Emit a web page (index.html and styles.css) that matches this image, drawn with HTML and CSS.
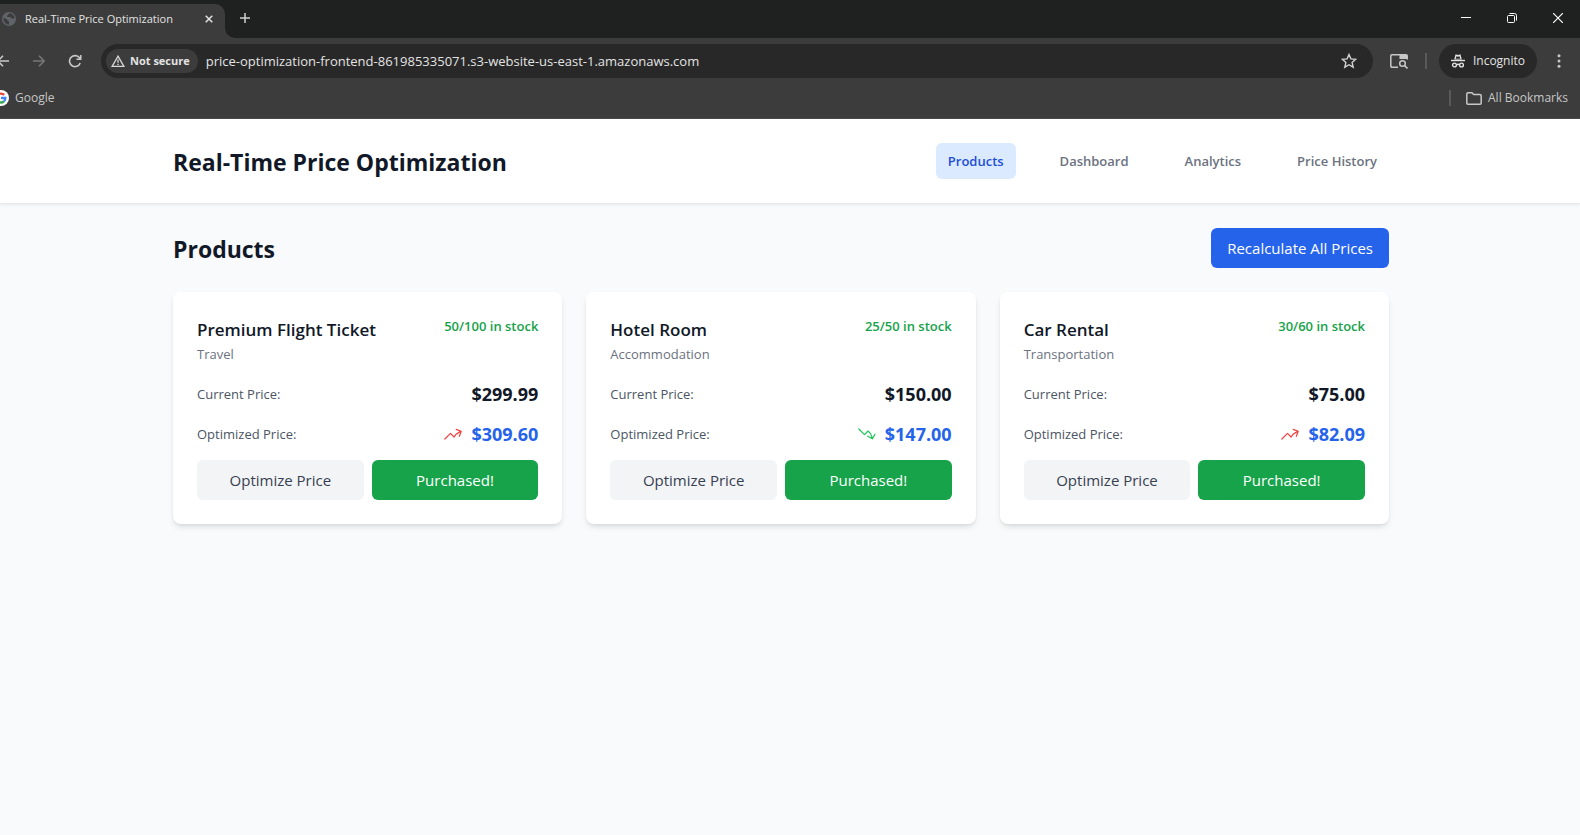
FILE: index.html
```html
<!DOCTYPE html>
<html lang="en">
<head>
<meta charset="utf-8">
<meta name="viewport" content="width=device-width, initial-scale=1">
<title>Real-Time Price Optimization</title>
<link rel="stylesheet" href="styles.css">
</head>
<body>
<div class="browser">
  <div class="tab-strip">
    <div class="tab">
      <svg class="tab-icon" width="14" height="14" viewBox="0 0 14 14"><circle cx="7" cy="7" r="7" fill="#606368"/><path d="M1.5 5.5C3 7 5 6.5 5.3 8c.2 1 1.700.8 1.700 2v2.700C4 12.700 1.200 10 1.500 5.500zM7 1.300c-.8 1-.3 1.700-1.700 2.200-.8.300-.4 1.500.6 1.500h2.300c1 0 .8 1.700 1.800 1.700s1.300-.8 2.700-.2C12.500 3.500 10 1.300 7 1.300z" fill="#3c3c3c"/></svg>
      <span class="tab-title">Real-Time Price Optimization</span>
      <button class="icon-button tab-close" aria-label="Close tab"><svg width="8" height="8" viewBox="0 0 8 8"><path d="M.7.7l6.600 6.600M7.300.7L.7 7.300" stroke="#e3e3e3" stroke-width="1.500"/></svg></button>
    </div>
    <svg class="tab-foot" width="10" height="10" viewBox="0 0 10 10"><path d="M0 0a10 10 0 0 0 10 10H0z" fill="#3c3c3c"/></svg>
    <button class="icon-button new-tab" aria-label="New tab"><svg width="10" height="10" viewBox="0 0 10 10"><path d="M5 0v10M0 5h10" stroke="#d0d0d0" stroke-width="1.500"/></svg></button>
    <div class="window-controls">
      <button class="icon-button" aria-label="Minimize"><svg width="10" height="10" viewBox="0 0 10 10"><path d="M0 4.500h10" stroke="#fff"/></svg></button>
      <button class="icon-button" aria-label="Restore"><svg width="10" height="10" viewBox="0 0 10 10"><rect x=".5" y="2.500" width="7" height="7" rx="1" fill="none" stroke="#fff"/><path d="M2.500.5h5a2 2 0 0 1 2 2v5" fill="none" stroke="#fff"/></svg></button>
      <button class="icon-button" aria-label="Close"><svg width="10" height="10" viewBox="0 0 10 10"><path d="M0 0l10 10M10 0L0 10" stroke="#fff" stroke-width="1.200"/></svg></button>
    </div>
  </div>
  <div class="toolbar">
    <button class="icon-button" aria-label="Back"><svg width="9" height="12" viewBox="3 0 9 12"><path d="M12 6H1M6 .8L.8 6 6 11.200" fill="none" stroke="#c7c7c7" stroke-width="1.600"/></svg></button>
    <button class="icon-button forward" aria-label="Forward"><svg width="12" height="12" viewBox="0 0 12 12"><path d="M0 6h11M6 .8L11.200 6 6 11.200" fill="none" stroke="#777" stroke-width="1.600"/></svg></button>
    <button class="icon-button reload" aria-label="Reload"><svg width="14" height="14" viewBox="0 0 14 14"><path d="M12.200 9A5.500 5.500 0 1 1 11 3.300l1.300 1.400M12.700 1v4.200H8.500" fill="none" stroke="#c7c7c7" stroke-width="1.600"/></svg></button>
    <div class="omnibox">
      <button class="security"><svg width="14" height="12" viewBox="0 0 14 12"><path d="M7 1.200L12.900 11.300H1.100z" fill="none" stroke="#d8d8d8" stroke-width="1.300"/><path d="M7 4.500v3.300M7 8.700v1.300" stroke="#d8d8d8" stroke-width="1.300"/></svg>Not secure</button>
      <input class="address" type="text" aria-label="Address" value="price-optimization-frontend-861985335071.s3-website-us-east-1.amazonaws.com">
      <button class="icon-button" aria-label="Bookmark this page"><svg width="16" height="16" viewBox="0 0 16 16"><path d="M8 1.500l1.900 4.400 4.800.4-3.600 3.200 1.100 4.700L8 11.700l-4.200 2.500 1.100-4.700L1.300 6.300l4.800-.4z" fill="none" stroke="#d0d0d0" stroke-width="1.400"/></svg></button>
    </div>
    <button class="icon-button lens" aria-label="Search this page"><svg width="18" height="15" viewBox="0 0 18 15"><path d="M8 13.200H2a1.200 1.200 0 0 1-1.200-1.200V2A1.200 1.200 0 0 1 2 .8h14A1.200 1.200 0 0 1 17.200 2v3.500" fill="none" stroke="#c7c7c7" stroke-width="1.500"/><path d="M9.500.5H16A1.500 1.500 0 0 1 17.500 2v3h-8z" fill="#c7c7c7"/><circle cx="12.500" cy="9.500" r="2.800" fill="none" stroke="#c7c7c7" stroke-width="1.500"/><path d="M14.500 11.500l3 3" stroke="#c7c7c7" stroke-width="1.600"/></svg></button>
    <span class="divider"></span>
    <button class="incognito"><svg width="14" height="14" viewBox="0 0 14 14"><path d="M3.200 5.500L4.400.8q.2-.6.8-.4L7 1l1.800-.6q.6-.2.800.4l1.200 4.700z" fill="#e3e3e3"/><path d="M4.700 4.800L5.500 2.200 7 2.700l1.500-.5.8 2.600z" fill="#282828"/><path d="M0 6.500h14" stroke="#e3e3e3" stroke-width="1.400"/><g fill="none" stroke="#e3e3e3" stroke-width="1.400"><circle cx="3.500" cy="11" r="1.900"/><circle cx="10.500" cy="11" r="1.900"/><path d="M5.300 10.800q1.700-1 3.400 0"/></g></svg>Incognito</button>
    <button class="icon-button menu" aria-label="Menu"><svg width="4" height="14" viewBox="0 0 4 14" fill="#c7c7c7"><circle cx="2" cy="1.700" r="1.500"/><circle cx="2" cy="7" r="1.500"/><circle cx="2" cy="12.300" r="1.500"/></svg></button>
  </div>
  <div class="bookmarks">
    <a class="bookmark" href="#"><svg width="9" height="16" viewBox="7 0 9 16"><circle cx="8" cy="8" r="8" fill="#fff"/><g fill="none" stroke-width="2.300"><path d="M11.200 4.900A4.500 4.500 0 0 0 4.200 5.600" stroke="#ea4335"/><path d="M4.200 10.300A4.500 4.500 0 0 0 10.900 11.500" stroke="#34a853"/><path d="M8 8h4.400a4.500 4.500 0 0 1-1.500 3.500" stroke="#4285f4"/></g></svg>Google</a>
    <span class="divider"></span>
    <button class="all-bookmarks"><svg width="16" height="13" viewBox="0 0 16 13"><path d="M.8 11V2A1.200 1.200 0 0 1 2 .8h4l1.700 1.700H14a1.200 1.200 0 0 1 1.200 1.200V11a1.200 1.200 0 0 1-1.200 1.200H2A1.200 1.200 0 0 1 .8 11z" fill="none" stroke="#c7c7c7" stroke-width="1.500"/></svg>All Bookmarks</button>
  </div>
</div>

<header class="site-header">
  <div class="container header-row">
    <h1 class="heading">Real-Time Price Optimization</h1>
    <nav class="nav">
      <a class="nav-link active" href="#">Products</a>
      <a class="nav-link" href="#">Dashboard</a>
      <a class="nav-link" href="#">Analytics</a>
      <a class="nav-link" href="#">Price History</a>
    </nav>
  </div>
</header>

<main class="container main">
  <div class="title-row">
    <h2 class="heading">Products</h2>
    <button class="button primary">Recalculate All Prices</button>
  </div>
  <div class="grid">
    <article class="card">
      <div class="card-head">
        <div><h3 class="name">Premium Flight Ticket</h3><p class="category">Travel</p></div>
        <span class="stock">50/100 in stock</span>
      </div>
      <div class="row"><span>Current Price:</span><span class="price">$299.99</span></div>
      <div class="row"><span>Optimized Price:</span><span class="price optimized"><svg class="trend up" viewBox="0 0 24 24"><path d="M2.25 18L9 11.25l4.306 4.307a11.95 11.95 0 0 1 5.814-5.519l2.740-1.220m0 0l-5.940-2.280m5.940 2.280l-2.280 5.941"/></svg>$309.60</span></div>
      <div class="actions"><button class="button secondary">Optimize Price</button><button class="button success">Purchased!</button></div>
    </article>
    <article class="card">
      <div class="card-head">
        <div><h3 class="name">Hotel Room</h3><p class="category">Accommodation</p></div>
        <span class="stock">25/50 in stock</span>
      </div>
      <div class="row"><span>Current Price:</span><span class="price">$150.00</span></div>
      <div class="row"><span>Optimized Price:</span><span class="price optimized"><svg class="trend down" viewBox="0 0 24 24"><path d="M2.25 6L9 12.75l4.286-4.286a11.948 11.948 0 0 1 4.306 6.430l.776 2.898m0 0l3.182-5.511m-3.182 5.510l-5.511-3.181"/></svg>$147.00</span></div>
      <div class="actions"><button class="button secondary">Optimize Price</button><button class="button success">Purchased!</button></div>
    </article>
    <article class="card">
      <div class="card-head">
        <div><h3 class="name">Car Rental</h3><p class="category">Transportation</p></div>
        <span class="stock">30/60 in stock</span>
      </div>
      <div class="row"><span>Current Price:</span><span class="price">$75.00</span></div>
      <div class="row"><span>Optimized Price:</span><span class="price optimized"><svg class="trend up" viewBox="0 0 24 24"><path d="M2.25 18L9 11.25l4.306 4.307a11.95 11.95 0 0 1 5.814-5.519l2.740-1.220m0 0l-5.940-2.280m5.940 2.280l-2.280 5.941"/></svg>$82.09</span></div>
      <div class="actions"><button class="button secondary">Optimize Price</button><button class="button success">Purchased!</button></div>
    </article>
  </div>
</main>
</body>
</html>
```

FILE: styles.css
```css
*, *::before, *::after { box-sizing: border-box; }
body {
  margin: 0;
  min-height: 100vh;
  background: #f9fafb;
  color: #111827;
  font: 15px/24px "Open Sans", "Noto Sans", sans-serif;
}
h1, h2, h3, p { margin: 0; }
a { color: inherit; text-decoration: none; }
button { font: inherit; color: inherit; border: 0; padding: 0; background: none; cursor: pointer; }
svg { display: block; flex: none; }

/* Browser frame */
.browser { background: #3c3c3c; border-bottom: 1px solid #4a4a4a; color: #e3e3e3; font-size: 12px; line-height: 16px; }
.icon-button { display: flex; align-items: center; justify-content: center; flex: none; }
.tab-strip { display: flex; height: 38px; background: #1f2120; }
.tab { display: flex; align-items: center; width: 225px; margin-top: 4px; padding: 0 12px 4px 2px; background: #3c3c3c; border-radius: 0 10px 0 0; }
.tab-title { flex: 1; margin-left: 9px; font-size: 11px; white-space: nowrap; }
.tab-close { width: 8px; height: 16px; }
.tab-foot { align-self: flex-end; }
.new-tab { width: 20px; height: 36px; }
.window-controls { display: flex; gap: 10px; margin-left: auto; padding-right: 4px; }
.window-controls .icon-button { width: 36px; height: 36px; }
.toolbar { display: flex; align-items: center; padding: 6px 19px 6px 0; }
.forward { margin-left: 24px; }
.reload { margin: 0 19px 0 23px; }
.omnibox { display: flex; align-items: center; flex: 1; height: 34px; padding: 0 16px 0 5px; background: #282828; border-radius: 17px; }
.security { display: flex; align-items: center; gap: 5px; height: 24px; padding: 0 8px 0 5px; border-radius: 12px; background: #3c3c3c; font-size: 11px; font-weight: 700; white-space: nowrap; }
.address { flex: 1; min-width: 0; margin-left: 8px; padding: 0; border: 0; outline: 0; background: none; color: #e3e3e3; font: 13px/20px "Open Sans", "Noto Sans", sans-serif; }
.lens { margin: 0 17px; }
.divider { width: 2px; height: 16px; background: #5a5a5a; }
.incognito { display: flex; align-items: center; gap: 8px; height: 34px; margin: 0 20px 0 12px; padding: 0 12px; border-radius: 17px; background: #282828; white-space: nowrap; }
.menu { width: 4px; }
.bookmarks { display: flex; align-items: center; height: 34px; padding: 0 12px 6px 0; color: #c7c7c7; }
.bookmark { display: flex; align-items: center; gap: 6px; margin-right: auto; }
.all-bookmarks { display: flex; align-items: center; gap: 6px; margin-left: 15px; }

/* Application */
.site-header { padding-right: 18px; background: #fff; border-bottom: 1px solid #e9eaeb; box-shadow: 0 1px 3px rgba(0, 0, 0, .08); }
.container { max-width: 1280px; margin: 0 auto; padding: 24px 32px; }
.main { max-width: 1298px; padding-right: 50px; }
.header-row, .title-row, .card-head, .row { display: flex; justify-content: space-between; }
.header-row, .title-row, .row { align-items: center; }
.heading { padding-top: 2px; font-size: 23px; line-height: 32px; font-weight: 700; }
.nav { display: flex; gap: 32px; }
.nav-link { padding: 8px 12px; border-radius: 6px; color: #6b7280; font-size: 13px; line-height: 20px; font-weight: 600; }
.nav-link.active { background: #dbeafe; color: #1d4ed8; }
.title-row { margin-bottom: 24px; }
.button { padding: 8px 16px; border-radius: 6px; white-space: nowrap; }
.primary { background: #2563eb; color: #fff; }
.grid { display: grid; grid-template-columns: repeat(3, minmax(0, 1fr)); gap: 24px; }
.card { display: grid; gap: 12px; padding: 24px; border-radius: 8px; background: #fff; box-shadow: 0 4px 6px -1px rgba(0, 0, 0, .1), 0 2px 4px -2px rgba(0, 0, 0, .1); }
.card-head { margin-bottom: 4px; }
.name { font-size: 17px; line-height: 28px; font-weight: 600; }
.category { color: #6b7280; font-size: 13px; line-height: 20px; }
.stock { color: #16a34a; font-size: 13px; line-height: 20px; font-weight: 600; }
.row { color: #4b5563; font-size: 13px; line-height: 20px; }
.price { display: flex; align-items: center; color: #111827; font-size: 18px; line-height: 28px; font-weight: 700; }
.optimized { color: #2563eb; }
.trend { width: 20px; height: 20px; margin-right: 8px; fill: none; stroke-width: 1.5; stroke-linecap: round; stroke-linejoin: round; }
.up { stroke: #ef4444; }
.down { stroke: #22c55e; }
.actions { display: grid; grid-template-columns: 1fr 1fr; gap: 8px; }
.secondary { background: #f3f4f6; color: #374151; }
.success { background: #16a34a; color: #fff; }
```
